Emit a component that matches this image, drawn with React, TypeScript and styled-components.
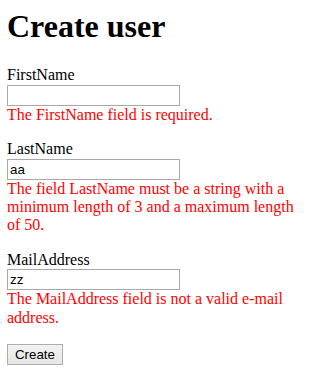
import React from 'react'
import styled, { createGlobalStyle } from 'styled-components'

const GlobalStyle = createGlobalStyle`
  body {
    margin: 8px 8px 8px 7px;
    background: #fff;
    color: #000;
    font: 16px 'Liberation Serif', 'Times New Roman', serif;
  }
`

const Title = styled.h1`
  margin: 0 0 0.67em 0;
  font-size: 32px;
  font-weight: bold;
  line-height: 37px;
`

const Form = styled.form`
  display: flex;
  flex-direction: column;
  align-items: flex-start;
`

const Field = styled.div`
  display: flex;
  flex-direction: column;
  align-items: flex-start;
  margin-bottom: 16px;
  width: 100%;
`

const Label = styled.label`
  display: block;
  line-height: 18.4px;
`

const Input = styled.input`
  box-sizing: border-box;
  width: 173px;
  height: 21px;
  margin: 0;
  padding: 1px 2px;
  border: 1px solid #a9a9a9;
  border-radius: 0;
  outline: none;
  font: 13.33px 'Liberation Sans', Arial, sans-serif;
  color: #000;
`

const Message = styled.div`
  color: #ff0000;
  line-height: 18.4px;
  max-width: 296px;
`

const Button = styled.button`
  box-sizing: border-box;
  width: 56px;
  height: 21px;
  margin-top: 1px;
  padding: 0 6px;
  border: 1px solid #adadad;
  border-radius: 0;
  background: linear-gradient(#f2f2f2, #e6e6e6);
  font: 13.33px 'Liberation Sans', Arial, sans-serif;
  color: #000;
`

type FieldProps = {
  name: string
  value: string
  message: string
}

function FormField({ name, value, message }: FieldProps) {
  return (
    <Field>
      <Label htmlFor={name}>{name}</Label>
      <Input id={name} type='text' defaultValue={value} />
      <Message>{message}</Message>
    </Field>
  )
}

export default function App() {
  return (
    <>
      <GlobalStyle />
      <Title>Create user</Title>
      <Form onSubmit={(e) => e.preventDefault()}>
        <FormField
          name='FirstName'
          value=''
          message='The FirstName field is required.'
        />
        <FormField
          name='LastName'
          value='aa'
          message='The field LastName must be a string with a minimum length of 3 and a maximum length of 50.'
        />
        <FormField
          name='MailAddress'
          value='zz'
          message='The MailAddress field is not a valid e-mail address.'
        />
        <Button type='submit'>Create</Button>
      </Form>
    </>
  )
}
